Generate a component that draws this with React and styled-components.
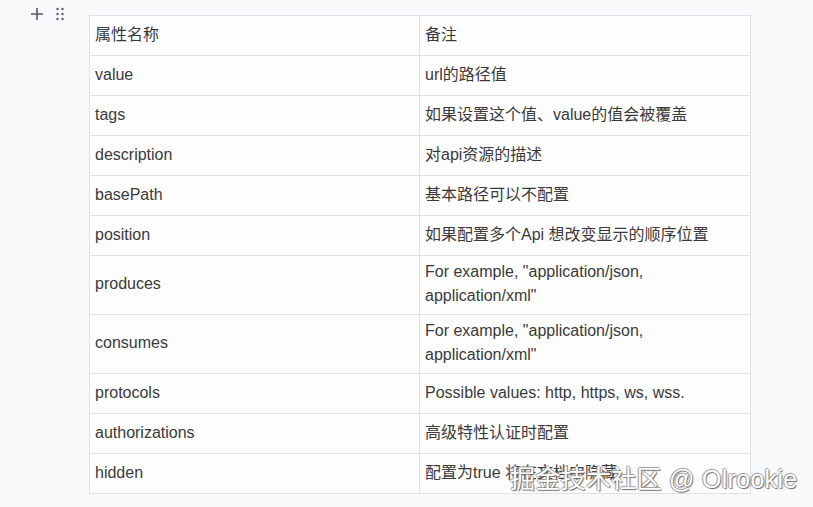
import React from "react";
import styled, { createGlobalStyle } from "styled-components";

const GlobalStyle = createGlobalStyle`
  body {
    margin: 0;
    background: #f8f9fa;
    font-family: "Liberation Sans", Arial, "Noto Sans CJK SC", sans-serif;
  }
`;

const Page = styled.div`
  position: relative;
  width: 813px;
  height: 507px;
  display: flex;
  align-items: flex-start;
  padding: 15px 0 0 0;
  box-sizing: border-box;
  overflow: hidden;
`;

const Gutter = styled.div`
  display: flex;
  gap: 12px;
  width: 89px;
  padding: 0 0 0 30px;
  margin-top: -8px;
  box-sizing: border-box;
  color: #555a61;
`;

const Table = styled.table`
  border-collapse: collapse;
  width: 662px;
  table-layout: fixed;
  font-size: 16px;
  color: #3a3a3a;
  background: #fdfdfe;
`;

const Cell = styled.td`
  border: 1px solid #dfe1e5;
  height: 29px;
  padding: 4px 6px 6px 5px;
  line-height: 24px;
  vertical-align: middle;
  width: ${(p) => p.$w || "auto"};
`;

const Watermark = styled.div`
  position: absolute;
  left: 510px;
  top: 459px;
  font-size: 25px;
  color: #fff;
  letter-spacing: 0.3px;
  text-shadow: 1px 1px 1px #6c6c6c, -1px 0 1px #9a9a9a, 0 -1px 1px #9a9a9a;
  font-family: "Liberation Sans", "Noto Sans CJK SC", sans-serif;
`;

const rows = [
  ["属性名称", "备注"],
  ["value", "url的路径值"],
  ["tags", "如果设置这个值、value的值会被覆盖"],
  ["description", "对api资源的描述"],
  ["basePath", "基本路径可以不配置"],
  ["position", "如果配置多个Api 想改变显示的顺序位置"],
  ["produces", <>For example, "application/json,<br />application/xml"</>],
  ["consumes", <>For example, "application/json,<br />application/xml"</>],
  ["protocols", "Possible values: http, https, ws, wss."],
  ["authorizations", "高级特性认证时配置"],
  ["hidden", "配置为true 将在文档中隐藏"],
];

function PlusIcon() {
  return (
    <svg width="14" height="14" viewBox="0 0 14 14">
      <path d="M7 1v12M1 7h12" stroke="currentColor" strokeWidth="1.6" />
    </svg>
  );
}

function DragIcon() {
  return (
    <svg width="8" height="14" viewBox="0 0 8 14">
      {[2, 7, 12].map((y) =>
        [1.5, 6.5].map((x) => (
          <circle key={`${x}-${y}`} cx={x} cy={y} r="1.2" fill="currentColor" />
        ))
      )}
    </svg>
  );
}

export default function App() {
  return (
    <>
      <GlobalStyle />
      <Page>
        <Gutter>
          <PlusIcon />
          <DragIcon />
        </Gutter>
        <Table>
          <tbody>
            {rows.map(([name, note], i) => (
              <tr key={i}>
                <Cell $w="318px">{name}</Cell>
                <Cell>{note}</Cell>
              </tr>
            ))}
          </tbody>
        </Table>
        <Watermark>掘金技术社区 @ Olrookie</Watermark>
      </Page>
    </>
  );
}
